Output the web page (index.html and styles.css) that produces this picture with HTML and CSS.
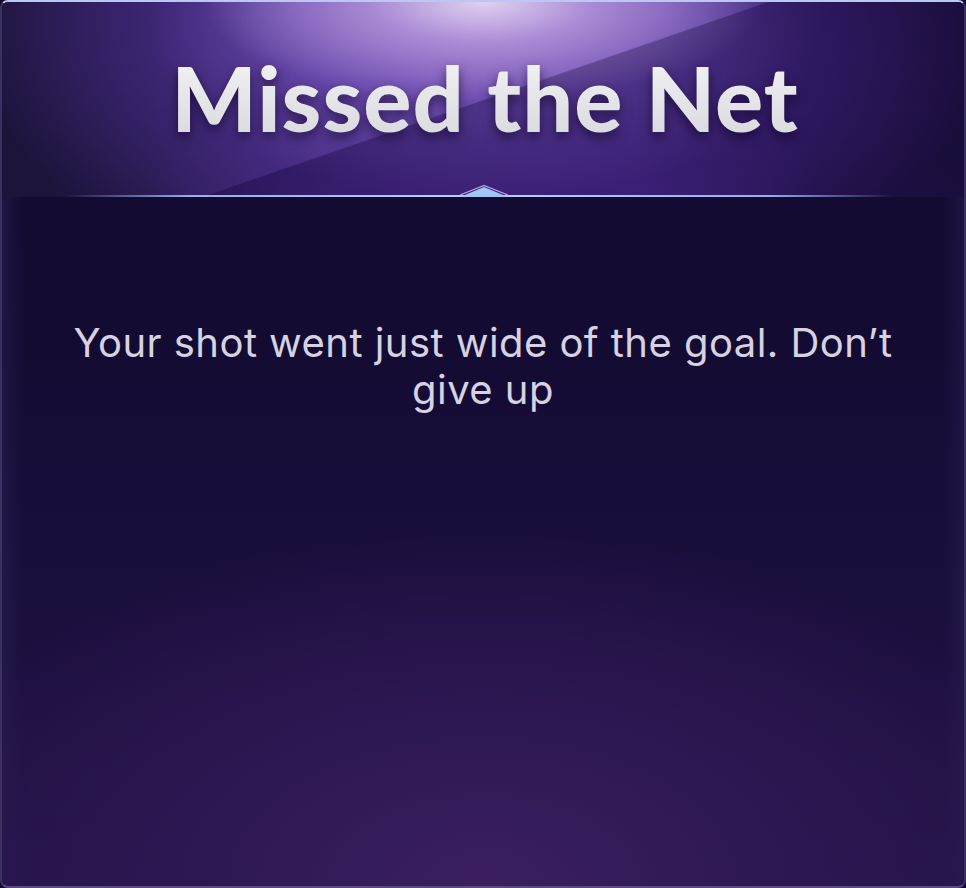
FILE: index.html
```html
<!DOCTYPE html>
<html lang="en">
<head>
<meta charset="utf-8">
<title>Missed the Net</title>
<link rel="stylesheet" href="styles.css">
</head>
<body>
<div class="panel">
  <header class="hero">
    <div class="band"></div>
    <h1 class="title">Missed the Net</h1>
    <div class="divider">
      <svg class="notch" width="52" height="12" viewBox="0 0 52 12">
        <path d="M2 12 L26 2 L50 12 Z" fill="#9fc6f5"/>
        <path d="M2 10 L26 0.5 L50 10" fill="none" stroke="#c9a8f0" stroke-width="1.2"/>
      </svg>
    </div>
  </header>
  <main class="body">
    <p class="message">Your shot went just wide of the goal. Don’t give up</p>
  </main>
</div>
</body>
</html>
```
FILE: styles.css
```css
* { box-sizing: border-box; }
html, body { margin: 0; height: 100%; background: #120a2e; }
body { font-family: Inter, "Noto Sans", sans-serif; }
.panel {
  position: relative;
  height: 888px;
  width: 966px;
  border-radius: 8px;
  overflow: hidden;
  border: 2px solid #3b3060;
  border-top: 2px solid #b9c8f4;
  border-bottom: 2px solid #5b4a82;
  background:
    radial-gradient(ellipse 620px 360px at 50% 100%, #3b1f5f 0%, #2c1752 50%, rgba(30,16,64,0) 100%),
    linear-gradient(90deg, rgba(40,30,80,0.55) 0px, rgba(18,10,46,0) 22px, rgba(18,10,46,0) 940px, rgba(40,30,80,0.5) 962px),
    linear-gradient(180deg, #110a30 0%, #140b33 40%, #221247 100%);
  display: flex;
  flex-direction: column;
}
.hero {
  position: relative;
  height: 195px;
  flex: none;
  overflow: hidden;
  background:
    radial-gradient(ellipse 280px 100px at 50% 0%, rgba(228,214,242,0.95) 0%, rgba(195,165,228,0.65) 40%, rgba(150,110,210,0) 100%),
    radial-gradient(ellipse 520px 280px at 50% 10%, #7d58c0 0%, #6242a8 35%, rgba(70,40,140,0.6) 65%, rgba(40,20,90,0) 100%),
    linear-gradient(90deg, #150c33 0%, #1a0f3e 15%, rgba(28,16,64,0) 35%, rgba(28,16,64,0) 65%, #1a0f3e 85%, #150c33 100%),
    linear-gradient(180deg, #2a1a58 0%, #2c1a5a 55%, #44207a 100%);
  display: flex;
  align-items: center;
  justify-content: center;
}
.band {
  position: absolute;
  left: 0; top: 0; right: 0; bottom: 0;
  background: linear-gradient(161deg, rgba(255,255,255,0.03) 0%, rgba(255,255,255,0.03) 50%, rgba(20,8,50,0.3) 50.3%, rgba(50,20,100,0.2) 100%);
}
.title {
  position: relative;
  margin: 0 0 6px 4px;
  font-family: Lato, Inter, sans-serif;
  font-weight: 900;
  font-size: 90px;
  letter-spacing: 1px;
  line-height: 1;
  color: #e6e6ea;
  background: linear-gradient(180deg, #f4f4f6 0%, #d8d8de 100%);
  -webkit-background-clip: text;
  background-clip: text;
  -webkit-text-fill-color: transparent;
  filter: drop-shadow(0 5px 6px rgba(10,0,30,0.6));
}
.divider {
  position: absolute;
  left: 64px; right: 70px; bottom: 0;
  height: 2px;
  background: linear-gradient(90deg, rgba(150,180,240,0) 0%, #8fb0ec 15%, #b8d2fa 50%, #8fb0ec 85%, rgba(150,180,240,0) 100%);
}
.notch {
  position: absolute;
  left: 50%;
  bottom: 0;
  transform: translateX(-50%);
  margin-left: 4px;
}
.body {
  flex: 1;
  display: flex;
  justify-content: center;
  padding: 122px 50px 0;
}
.message {
  margin: 0;
  max-width: 840px;
  text-align: center;
  font-family: Inter, "Noto Sans", sans-serif;
  font-size: 40px;
  line-height: 47px;
  font-weight: 400;
  color: #d6d2e2;
  letter-spacing: 0.45px;
}
```
